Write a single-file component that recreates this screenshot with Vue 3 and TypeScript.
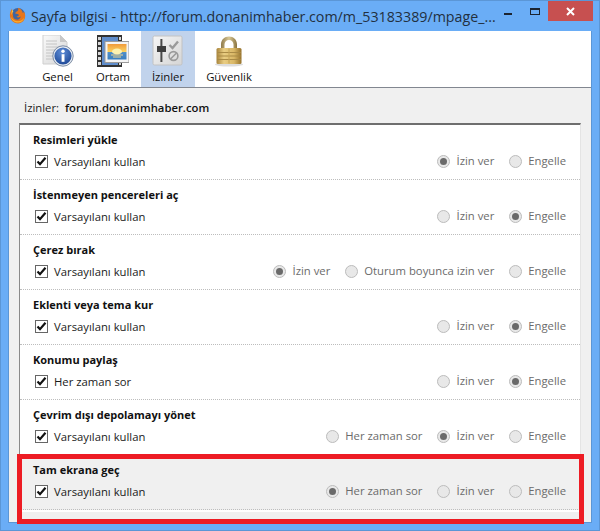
<script setup lang="ts">
interface Opt { label: string; state: 'on' | 'off' }
interface Row { title: string; check: string; opts: Opt[]; muted?: boolean }
const o = (label: string, on = false): Opt => ({ label, state: on ? 'on' : 'off' })
const rows: Row[] = [
  { title: 'Resimleri yükle', check: 'Varsayılanı kullan', opts: [o('İzin ver', true), o('Engelle')] },
  { title: 'İstenmeyen pencereleri aç', check: 'Varsayılanı kullan', opts: [o('İzin ver'), o('Engelle', true)] },
  { title: 'Çerez bırak', check: 'Varsayılanı kullan', opts: [o('İzin ver', true), o('Oturum boyunca izin ver'), o('Engelle')] },
  { title: 'Eklenti veya tema kur', check: 'Varsayılanı kullan', opts: [o('İzin ver'), o('Engelle', true)] },
  { title: 'Konumu paylaş', check: 'Her zaman sor', opts: [o('İzin ver'), o('Engelle', true)] },
  { title: 'Çevrim dışı depolamayı yönet', check: 'Varsayılanı kullan', opts: [o('Her zaman sor'), o('İzin ver', true), o('Engelle')] },
  { title: 'Tam ekrana geç', check: 'Varsayılanı kullan', opts: [o('Her zaman sor', true), o('İzin ver'), o('Engelle')], muted: true },
]
const tabs = ['Genel', 'Ortam', 'İzinler', 'Güvenlik']
</script>

<template>
  <div class="window">
    <header class="titlebar">
      <svg class="ff" width="17" height="17" viewBox="0 0 17 17">
        <circle cx="9" cy="8" r="7" fill="#41659f" />
        <path d="M3 1.5C1.5 4 .6 6.5 1 9.5 1.6 13.6 5 16.5 9 16.5 13.2 16.5 16.3 13 16.2 8.8 16.1 7 15.6 5.4 14.8 4.2 14.8 5.2 14.4 5.8 13.8 6 13.4 3.6 11.6 1.4 9 .8 9.8 2.4 9.2 3.8 7.8 4.4 6.4 5 6 6 6.6 6.8 7.8 7 9.4 7 9.8 8 9.8 9.2 8.6 9.6 7.4 9.4 8.4 10.8 10.6 10.6 11.8 9.6 11.4 12 9.2 13.2 7 12.6 5 12 3.8 10.2 4 8.2 3.4 6.2 3 4 3 1.5Z" fill="#e8751a" />
        <path d="M2 10C2.6 13.4 5.6 15.6 9 15.6 12 15.6 14.6 13.6 15.4 10.6 14 13 11.6 14.2 9 14.2 6 14.2 3.6 12.8 2 10Z" fill="#f6b12e" />
        <path d="M3.2 3C2.6 4.6 2.4 6.4 2.8 8 3.2 6.4 3.6 5 4.4 4Z" fill="#f9c84a" />
      </svg>
      <span class="wintitle">Sayfa bilgisi - http://forum.donanimhaber.com/m_53183389/mpage_...</span>
      <span class="winbtn minimize"><i></i></span>
      <span class="winbtn maximize"><i></i></span>
      <span class="winbtn close">
        <svg width="9" height="9" viewBox="0 0 9 9"><path d="M1 1 8 8M8 1 1 8" stroke="#fff" stroke-width="2" /></svg>
      </span>
    </header>

    <div class="client">
      <nav class="toolbar">
        <div v-for="(t, i) in tabs" :key="t" class="tab" :class="['tab' + i, { active: i === 2 }]">
          <svg v-if="i === 0" width="32" height="32" viewBox="0 0 32 32">
            <defs>
              <linearGradient id="pg" x1="0" y1="0" x2="1" y2="1"><stop offset="0" stop-color="#fafafa" /><stop offset="1" stop-color="#d6d6d6" /></linearGradient>
              <radialGradient id="bl" cx=".45" cy=".3" r=".8"><stop offset="0" stop-color="#5f8ed8" /><stop offset="1" stop-color="#16408f" /></radialGradient>
            </defs>
            <path d="M1 0H18L25 7V29H1Z" fill="url(#pg)" stroke="#cfcfcf" />
            <path d="M18 0V7H25Z" fill="#c8c8c8" />
            <path d="M4 6H15M4 9H15M4 12H20M4 15H13M4 18H11M4 21H11M4 24H12" stroke="#c4c4c4" />
            <circle cx="21" cy="21" r="10.2" fill="#e8edf3" stroke="#7b8ba3" />
            <circle cx="21" cy="21" r="8.6" fill="url(#bl)" />
            <circle cx="21" cy="16.2" r="1.7" fill="#fff" />
            <rect x="19.6" y="19.2" width="2.9" height="7.6" fill="#fff" />
          </svg>
          <svg v-else-if="i === 1" width="32" height="32" viewBox="0 0 32 32">
            <defs>
              <linearGradient id="sky" x1="0" y1="0" x2="0" y2="1"><stop offset="0" stop-color="#f09a3a" /><stop offset=".5" stop-color="#fbd360" /><stop offset=".55" stop-color="#4e8ec9" /><stop offset="1" stop-color="#3a7fc0" /></linearGradient>
            </defs>
            <rect x="0" y="0" width="25" height="32" fill="#333" />
            <rect x="5" y="2" width="16" height="28" fill="#5f8dcc" />
            <path d="M1 2h3v3H1zM1 7h3v3H1zM1 12h3v3H1zM1 17h3v3H1zM1 22h3v3H1zM1 27h3v3H1zM22 2h2v3h-2zM22 27h2v3h-2z" fill="#d8d8d8" />
            <rect x="8" y="6.5" width="24" height="21" fill="#f4f4f4" stroke="#9a9a9a" />
            <rect x="10.5" y="9" width="19" height="15.5" fill="url(#sky)" />
            <ellipse cx="20" cy="16.5" rx="5" ry="3" fill="#fdf2b0" />
            <path d="M14 20h12M16 22h8" stroke="#f6d68a" />
          </svg>
          <svg v-else-if="i === 2" width="32" height="32" viewBox="0 0 32 32">
            <defs>
              <linearGradient id="pn" x1="0" y1="0" x2="1" y2="1"><stop offset="0" stop-color="#f6f6f6" /><stop offset="1" stop-color="#d5d5d5" /></linearGradient>
            </defs>
            <rect x="1" y="1" width="29" height="29" rx="1.5" fill="url(#pn)" stroke="#c2c2c2" />
            <rect x="8.4" y="4" width="2" height="23" fill="#4a4a4a" />
            <rect x="5" y="11" width="9" height="6" fill="#3e3e3e" />
            <path d="M17.5 10 20.5 13 26 6.5" fill="none" stroke="#9a9a9a" stroke-width="2.4" />
            <circle cx="21.5" cy="21" r="4.4" fill="none" stroke="#9a9a9a" stroke-width="1.6" />
            <path d="M18.5 24 24.5 18" stroke="#9a9a9a" stroke-width="1.6" />
          </svg>
          <svg v-else width="32" height="32" viewBox="0 0 32 32">
            <defs>
              <linearGradient id="lk" x1="0" y1="0" x2="1" y2="0"><stop offset="0" stop-color="#a8843c" /><stop offset=".3" stop-color="#e9cd82" /><stop offset=".7" stop-color="#d9b766" /><stop offset="1" stop-color="#96722c" /></linearGradient>
              <linearGradient id="sh" x1="0" y1="0" x2="1" y2="0"><stop offset="0" stop-color="#8f7a4a" /><stop offset=".5" stop-color="#d8c796" /><stop offset="1" stop-color="#8a7440" /></linearGradient>
            </defs>
            <ellipse cx="16" cy="29.5" rx="14" ry="2" fill="#ddd" />
            <path d="M8 14V9.5C8 4.5 11.5 1.5 16 1.5S24 4.5 24 9.5V14H20.5V9.5C20.5 7 18.5 5 16 5S11.5 7 11.5 9.5V14Z" fill="url(#sh)" />
            <rect x="3.5" y="13" width="25" height="16" rx="1.5" fill="url(#lk)" />
            <path d="M4 17.5H28M4 21H28M4 24.5H28" stroke="#a98a45" />
            <path d="M16 13.5V28.5" stroke="#c4a458" />
          </svg>
          <span class="tablabel">{{ t }}</span>
        </div>
      </nav>

      <div class="body">
        <p class="site"><span>İzinler:</span><b>forum.donanimhaber.com</b></p>
        <div class="listwrap">
          <div class="list">
            <section v-for="r in rows" :key="r.title" class="row" :class="{ muted: r.muted }">
              <h3>{{ r.title }}</h3>
              <div class="controls">
                <span class="checkbox">
                  <svg width="11" height="11" viewBox="0 0 11 11"><path d="M1.5 5.5 4 8.2 9.5 1.8" fill="none" stroke="#111" stroke-width="2.2" /></svg>
                </span>
                <span class="checklabel">{{ r.check }}</span>
                <div class="radios">
                  <span v-for="op in r.opts" :key="op.label" class="radio">
                    <i class="dot" :class="{ on: op.state === 'on' }"></i>{{ op.label }}
                  </span>
                </div>
              </div>
            </section>
          </div>
          <div class="highlight"></div>
        </div>
      </div>
    </div>
  </div>
</template>

<style>
html, body { margin: 0; background: #6aadf6; }
</style>

<style scoped>
.window {
  width: 600px;
  height: 531px;
  box-sizing: border-box;
  background: #6aadf6;
  border: 1px solid #5b96d6;
  padding: 0 7px 7px;
  display: flex;
  flex-direction: column;
  font-family: "Open Sans", "Noto Sans", sans-serif;
  overflow: hidden;
}
.titlebar {
  height: 30px;
  flex: none;
  display: flex;
  align-items: flex-start;
  position: relative;
}
.ff { margin: 6px 0 0 1px; }
.wintitle {
  margin: 6px 0 0 5px;
  font-size: 14.25px;
  line-height: 20px;
  color: #22303f;
  white-space: nowrap;
}
.winbtn { position: absolute; display: block; }
.minimize { left: 496px; top: 12px; width: 8px; height: 2px; }
.minimize i { display: block; height: 2px; background: #1c2430; }
.maximize { left: 522px; top: 7px; width: 10px; height: 7px; }
.maximize i { display: block; box-sizing: border-box; height: 7px; border: 1px solid #1c2430; border-top-width: 2px; }
.close {
  left: 540px; top: 0;
  width: 45px; height: 20px;
  background: #c75050;
  display: flex; align-items: center; justify-content: center;
}
.client {
  flex: 1;
  display: flex;
  flex-direction: column;
  background: #f0f0f0;
  border: 1px solid #5b96d6;
  border-top: 0;
  min-height: 0;
}
.toolbar {
  height: 56px;
  flex: none;
  background: #fff;
  border-bottom: 1px solid #828790;
  padding-left: 21px;
  display: flex;
}
.tab {
  display: flex;
  flex-direction: column;
  align-items: center;
  padding-top: 4px;
  box-sizing: border-box;
  height: 56px;
}
.tab0 { width: 55px; }
.tab1 { width: 56px; }
.tab2 { width: 54px; }
.tab3 { width: 68px; }
.tab.active { background: #c1d3ec; }
.tablabel { font-size: 11.3px; line-height: 16px; margin-top: 2px; color: #111; }
.body { flex: 1; display: flex; flex-direction: column; padding: 0 10px; min-height: 0; }
.site {
  margin: 12px 0 0;
  font-size: 11.3px;
  line-height: 16px;
  height: 23px;
  color: #222;
  padding-left: 5px;
  display: flex;
  gap: 6px;
}
.site b { font-weight: 600; color: #111; }
.listwrap { position: relative; flex: 1; min-height: 0; }
.list {
  box-sizing: border-box;
  height: 389px;
  border-top: 2px solid #6e6e6e;
  border-left: 1px solid #8a8a8a;
  border-right: 1px solid #e4e4e4;
  border-bottom: 1px solid #fff;
  background: #fff;
}
.row {
  height: 55px;
  box-sizing: border-box;
  border-bottom: 1px dotted #bdbdbd;
  padding: 6px 14px 0 13px;
}
.row.muted { background: #f0f0f0; }
.row h3 { margin: 0; font-size: 11px; line-height: 18px; font-weight: 700; color: #111; }
.controls { display: flex; align-items: center; height: 18px; margin-top: 3px; }
.checkbox {
  box-sizing: border-box;
  width: 13px; height: 13px;
  margin-left: 2px;
  border: 1px solid #666;
  background: #fff;
  display: flex; align-items: center; justify-content: center;
}
.checklabel { margin-left: 6px; font-size: 11.3px; color: #1a1a1a; }
.radios { margin-left: auto; display: flex; gap: 15px; }
.radio { display: flex; align-items: center; gap: 6px; font-size: 11.3px; color: #6b6b6b; line-height: 18px; white-space: nowrap; }
.dot {
  box-sizing: border-box;
  width: 13px; height: 13px;
  border-radius: 50%;
  border: 1px solid #bcbcbc;
  background: #e8e8e8;
  display: block;
  position: relative;
}
.dot.on::after {
  content: "";
  position: absolute;
  left: 2px; top: 2px;
  width: 7px; height: 7px;
  border-radius: 50%;
  background: #6a6a6a;
}
.highlight {
  position: absolute;
  left: -2px; right: -3px;
  top: 331px;
  height: 70px;
  box-sizing: border-box;
  border: 5px solid #ed1c24;
  pointer-events: none;
}
</style>
